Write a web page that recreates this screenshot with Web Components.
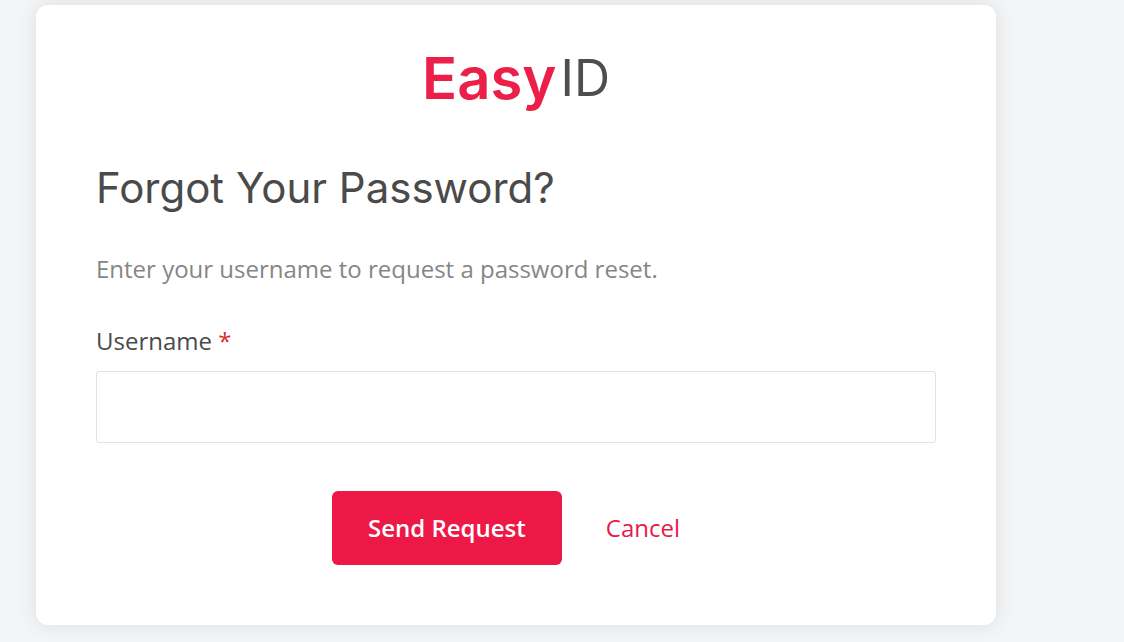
<!DOCTYPE html>
<html lang="en">
<head>
<meta charset="utf-8">
<meta name="viewport" content="width=device-width, initial-scale=1">
<title>Forgot Your Password? - Easy ID</title>
<style>
  body { margin: 0; background: #f4f5f7; font-family: "Open Sans", "Noto Sans", sans-serif; font-size: 24px; line-height: 32px; color: #4a4a4a; }
</style>
</head>
<body>
<reset-page></reset-page>
<script>
const define = (name, markup) => {
  const template = document.createElement('template');
  template.innerHTML = markup;
  customElements.define(name, class extends HTMLElement {
    constructor() {
      super();
      this.attachShadow({ mode: 'open' }).append(template.content.cloneNode(true));
    }
  });
};

define('brand-logo', `
  <style>
    :host { display: flex; justify-content: center; align-items: flex-start; gap: 4px; font-family: Inter, sans-serif; line-height: 64px; }
    .easy { font-size: 58px; font-weight: 600; color: #eb1f48; }
    .id { font-size: 50px; font-weight: 400; color: #4d4f4f; }
  </style>
  <span class="easy">Easy</span><span class="id">ID</span>`);

define('auth-card', `
  <style>
    :host { display: block; box-sizing: border-box; max-width: 960px; padding: 41px 60px 60px; border-radius: 12px; background: #fff; box-shadow: 0 0 20px rgba(0, 0, 0, .1); }
  </style>
  <slot></slot>`);

define('text-field', `
  <style>
    :host { display: grid; gap: 14px; }
    label { color: #4a4a4a; }
    .required { color: #d92b2b; }
    input { box-sizing: border-box; width: 100%; height: 72px; padding: 0 16px; border: 1px solid #dfe3e3; border-radius: 3px; background: #fff; font: inherit; color: inherit; }
  </style>
  <label for="field"><slot></slot> <span class="required">*</span></label>
  <input id="field" type="text" required>`);

define('form-actions', `
  <style>
    :host { display: flex; justify-content: center; align-items: center; gap: 24px; }
    button { margin: 0; padding: 21px 36px; border: 0; border-radius: 6px; background: #ee1847; color: #fff; font: inherit; font-weight: 600; }
    a { padding: 0 20px; color: #e51b48; text-decoration: none; }
  </style>
  <button type="button">Send Request</button>
  <a href="#">Cancel</a>`);

define('reset-page', `
  <style>
    :host { display: block; padding: 5px 36px 17px; }
    h1 { margin: 50px 0 0; font-family: Inter, sans-serif; font-size: 42px; font-weight: 400; line-height: 56px; color: #4a4a4a; }
    p { margin: 37px 0 40px; color: #868686; }
    form-actions { margin-top: 48px; }
  </style>
  <auth-card>
    <brand-logo></brand-logo>
    <h1>Forgot Your Password?</h1>
    <p>Enter your username to request a password reset.</p>
    <text-field>Username</text-field>
    <form-actions></form-actions>
  </auth-card>`);
</script>
</body>
</html>
